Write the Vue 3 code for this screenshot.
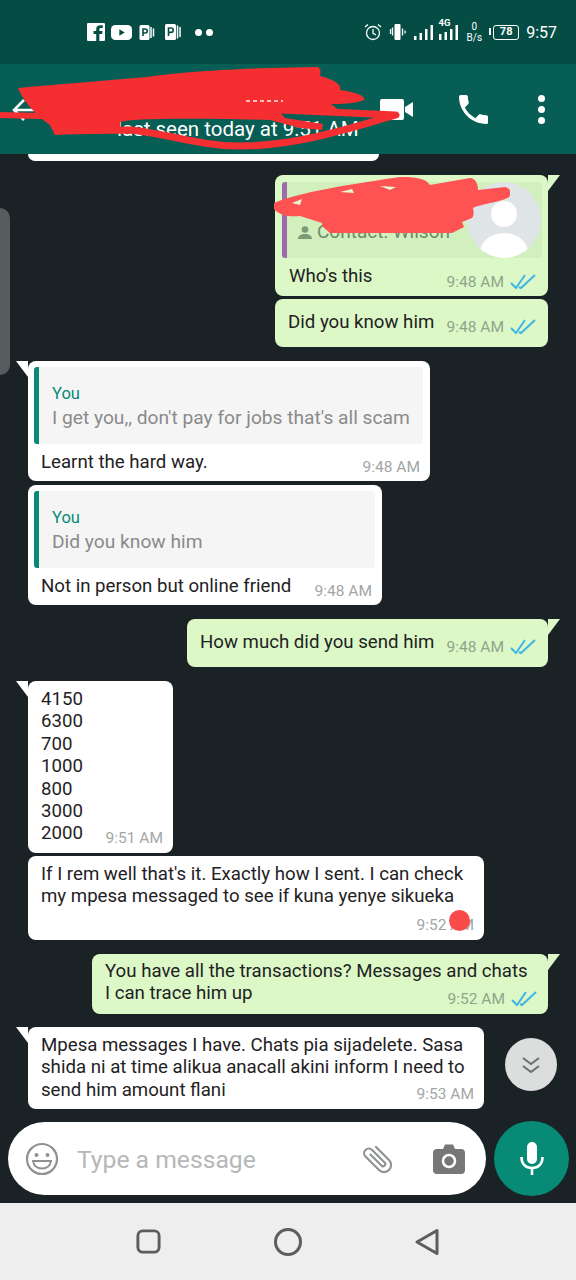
<template>
  <div class="phone">
    <div class="status">
      <div class="status-left">
        <svg width="18" height="18" viewBox="0 0 16 18" preserveAspectRatio="none"><path fill="#fff" d="M1 0h14a1 1 0 0 1 1 1v16a1 1 0 0 1-1 1h-4v-7h2.400l.4-3H11V6.400c0-.9.3-1.400 1.400-1.400H14V2.300C13.600 2.200 12.800 2.200 11.900 2.200 9.700 2.200 8.200 3.500 8.200 5.900V8H5.800v3h2.400v7H1a1 1 0 0 1-1-1V1a1 1 0 0 1 1-1z"/></svg>
        <svg width="21" height="15" viewBox="0 0 19 14" preserveAspectRatio="none"><rect width="19" height="14" rx="4" fill="#fff"/><path d="M7.500 4l5 3-5 3z" fill="#054d44"/></svg>
        <svg class="p-one" width="16" height="17" viewBox="0 0 15 17"><rect x="0" y="1" width="10" height="15" rx="1.500" fill="#fff"/><path fill="none" stroke="#054d44" stroke-width="1.600" d="M3.500 12V5h2.200a1.800 1.800 0 0 1 0 4H3.500"/><path fill="none" stroke="#fff" stroke-width="1.500" d="M11.500 3v11M14 4.500v8"/></svg>
        <svg class="p-two" width="18" height="18" viewBox="0 0 16 18"><rect x="0" y="1" width="11" height="16" rx="1.500" fill="#fff"/><path fill="none" stroke="#054d44" stroke-width="1.600" d="M3.500 13V5h2.500a2 2 0 0 1 0 4.400H3.500"/><path fill="none" stroke="#fff" stroke-width="1.500" d="M12.500 2.500v13M15 4v10"/></svg>
        <span class="dots"><i></i><i></i></span>
      </div>
      <div class="status-right">
        <svg width="18" height="18" viewBox="0 0 18 18" fill="none" stroke="#fff" stroke-width="1.300"><circle cx="9" cy="10" r="6.500"/><path d="M9 6v4.300l3 1.500M1 4l3-2.500M17 4l-3-2.500"/></svg>
        <svg width="18" height="16" viewBox="0 0 17 16"><rect x="5" y="0" width="6" height="16" rx="1" fill="#fff"/><path stroke="#fff" stroke-width="1.300" d="M1 5v5M3 3.500v8M13 4.500v7M15.500 6.500v3"/></svg>
        <svg class="bars" width="19" height="15" viewBox="0 0 19 15" fill="#fff"><rect x="0" y="11" width="2.500" height="4"/><rect x="5.500" y="8" width="2.500" height="7"/><rect x="11" y="4" width="2.500" height="11"/><rect x="16.500" y="0" width="2.500" height="15"/></svg>
        <span class="net">
          <b>4G</b>
          <svg width="19" height="15" viewBox="0 0 19 15" fill="#fff"><rect x="0" y="9" width="2.500" height="6"/><rect x="5.500" y="7" width="2.500" height="8"/><rect x="11" y="4" width="2.500" height="11"/><rect x="16.500" y="0" width="2.500" height="15"/></svg>
        </span>
        <span class="speed"><span>0</span><span>B/s</span></span>
        <span class="battery"><i></i><span>78</span></span>
        <span class="clock">9:57</span>
      </div>
    </div>

    <header class="topbar">
      <div class="who">
        <svg class="back" width="22" height="24" viewBox="0 0 22 24" fill="none" stroke="#fff" stroke-width="2.500"><path d="M12 2L2 12l10 10M2 12h20"/></svg>
        <div class="seen">last seen today at 9:51 AM</div>
      </div>
      <svg class="video" width="33" height="21" viewBox="0 0 33 21"><rect width="24" height="21" rx="2" fill="#fff"/><path d="M25 8l8-5v15l-8-5z" fill="#fff"/></svg>
      <svg class="phone-ic" width="29" height="29" viewBox="3 3 18 18"><path fill="#fff" d="M6.620 10.790c1.440 2.830 3.760 5.140 6.590 6.590l2.200-2.200c.27-.27.67-.36 1.020-.24 1.120.37 2.330.57 3.570.57.55 0 1 .45 1 1V20c0 .55-.45 1-1 1-9.390 0-17-7.610-17-17 0-.55.45-1 1-1h3.500c.55 0 1 .45 1 1 0 1.250.2 2.450.57 3.570.11.35.03.74-.25 1.020l-2.200 2.200z"/></svg>
      <span class="kebab"><i></i><i></i><i></i></span>
    </header>

    <main class="chat">
      <div class="cut-bubble"></div>

      <div class="bubble out first w-contact">
        <div class="contact-card">
          <div class="contact-line">
            <svg width="14" height="13" viewBox="0 0 14 13" fill="#7f9a76"><circle cx="7" cy="3.500" r="3.300"/><path d="M0 13c0-3.500 3-5 7-5s7 1.500 7 5z"/></svg>
            Contact: Wilson
          </div>
          <div class="avatar"><i></i><b></b></div>
        </div>
        <div class="row contact-row">
          <span>Who's this</span>
          <span class="meta">9:48 AM <Ticks /></span>
        </div>
      </div>

      <div class="bubble out tight pad-single w-contact">
        <div class="row">
          <span>Did you know him</span>
          <span class="meta">9:48 AM <Ticks /></span>
        </div>
      </div>

      <div class="bubble in first w-402 group">
        <div class="quote">
          <div class="quote-who">You</div>
          <div class="quote-text">I get you,, don't pay for jobs that's all scam</div>
        </div>
        <div class="row quote-row">
          <span>Learnt the hard way.</span>
          <span class="meta">9:48 AM</span>
        </div>
      </div>

      <div class="bubble in w-354 near">
        <div class="quote">
          <div class="quote-who">You</div>
          <div class="quote-text">Did you know him</div>
        </div>
        <div class="row quote-row">
          <span>Not in person but online friend</span>
          <span class="meta">9:48 AM</span>
        </div>
      </div>

      <div class="bubble out first pad-single w-361 group">
        <div class="row">
          <span>How much did you send him</span>
          <span class="meta">9:48 AM <Ticks /></span>
        </div>
      </div>

      <div class="bubble in first numbers group">
        <div>4150<br>6300<br>700<br>1000<br>800<br>3000<br>2000</div>
        <span class="meta over">9:51 AM</span>
      </div>

      <div class="bubble in tight multi w-456">
        <div>If I rem well that's it. Exactly how I sent. I can check<br>my mpesa messaged to see if kuna yenye sikueka</div>
        <span class="meta over">9:52 AM</span>
        <span class="red-dot"></span>
      </div>

      <div class="bubble out first multi-out w-456 group">
        <div>You have all the transactions? Messages and chats<br>I can trace him up</div>
        <span class="meta over">9:52 AM <Ticks /></span>
      </div>

      <div class="bubble in first last-msg w-456 group">
        <div>Mpesa messages I have. Chats pia sijadelete. Sasa<br>shida ni at time alikua anacall akini inform I need to<br>send him amount flani</div>
        <span class="meta over">9:53 AM</span>
      </div>

      <div class="edge-handle"></div>
      <div class="scroll-down">
        <svg width="22" height="22" viewBox="0 0 22 22" fill="none" stroke="#6b6f70" stroke-width="2"><path d="M3 4l8 6 8-6M3 12l8 6 8-6"/></svg>
      </div>
    </main>

    <div class="composer">
      <div class="input">
        <svg width="34" height="34" viewBox="0 0 34 34" fill="none" stroke="#8f9294" stroke-width="2.200"><circle cx="17" cy="17" r="15"/><circle cx="11.500" cy="13" r="2" fill="#8f9294" stroke="none"/><circle cx="22.500" cy="13" r="2" fill="#8f9294" stroke="none"/><path d="M8 19h18c-.8 5-4.500 7.500-9 7.500S8.800 24 8 19z" stroke-width="1.800"/></svg>
        <span class="placeholder">Type a message</span>
        <svg class="clip" width="34" height="34" viewBox="0 0 24 24" fill="none" stroke="#8f9294" stroke-width="1.500" stroke-linecap="round"><path transform="rotate(-45 12 12)" d="M17 5v13a5 5 0 0 1-10 0V4.500a3.300 3.300 0 0 1 6.600 0V17a1.600 1.600 0 0 1-3.200 0V6"/></svg>
        <svg class="camera" width="32" height="30" viewBox="0 0 32 30"><path fill="#757779" d="M4 5h6l2-4.500h8L22 5h6a4 4 0 0 1 4 4v17a4 4 0 0 1-4 4H4a4 4 0 0 1-4-4V9a4 4 0 0 1 4-4z"/><circle cx="16" cy="17" r="6" fill="none" stroke="#fff" stroke-width="2.500"/></svg>
      </div>
      <div class="mic">
        <svg width="24" height="33" viewBox="0 0 24 33" fill="none" stroke="#fff" stroke-width="2.600"><rect x="7" y="0" width="10" height="22" rx="5" fill="#fff" stroke="none"/><path d="M1.500 15c0 7 4 11 10.500 11s10.500-4 10.500-11M12 26v7"/></svg>
      </div>
    </div>

    <nav class="navbar">
      <svg width="27" height="27" viewBox="0 0 28 28" fill="none" stroke="#5b5d5f" stroke-width="3"><rect x="3" y="3" width="22" height="22" rx="5"/></svg>
      <svg width="30" height="30" viewBox="0 0 30 30" fill="none" stroke="#5b5d5f" stroke-width="3"><circle cx="15" cy="15" r="12.500"/></svg>
      <svg width="26" height="28" viewBox="0 0 26 28" fill="none" stroke="#5b5d5f" stroke-width="3" stroke-linejoin="round"><path d="M23 2.500v23L3 14z"/></svg>
    </nav>

    <!-- red scribbles drawn over the screenshot to hide the names -->
    <svg class="scribble header-scribble" width="576" height="100" viewBox="0 60 576 100" fill="none">
      <path fill="#f52f31" d="M18 88C50 85 100 81 147 77 180 72 240 68 318 67c4 3 2 7 2 9 15 4 22 9 20 14 15 2 26 6 24 10-9 4-24 4-33 4l9 7-60 1 5 6 38 6-1 6-22-2-30-8c-70-2-140-2-150 2v8l-65 5-5-10C40 118 25 105 18 88z"/>
      <path stroke="#f52f31" stroke-width="6" d="M0 115l120 3"/>
      <path stroke="#f52f31" stroke-width="7" stroke-linejoin="round" d="M55 131l75-1c40 4 70 16 110 16 60 0 120-21 156-31l-116-5"/>
      <path stroke="#ffe9e9" stroke-width="1.500" stroke-dasharray="4 3" d="M246 101h37"/>
    </svg>
    <svg class="scribble contact-scribble" width="236" height="56" viewBox="274 177 236 56">
      <path fill="#ff5252" d="M274 203c18-8 56-16 126-26 15 0 26 1 30 8l40-7c5 0 8 5 8 12l27-3c5 1 7 6 5 9-3 5-30 8-37 12 1 4 1 8-1 10l-10 4 2 5-12 6H330l-8-7v-3l-22-7c-10 1-20 0-26-7z"/>
      <path fill="#e6f8d2" d="M292 203l10-4-2 6zM340 192l12-3 2 4zM380 186l16 1-6 3z"/>
    </svg>
  </div>
</template>

<script setup>
import { h } from 'vue'

const Ticks = () => h('svg', { width: 27, height: 16, viewBox: '0 0 27 16', fill: 'none', stroke: '#3fb4e6', 'stroke-width': 2, class: 'ticks' }, [
  h('path', { d: 'M1 9l5 5L15 1M9 13l2 1L25 1' }),
])
</script>

<style>
body {
  background: #1a2226;
}
</style>

<style scoped>
.phone {
  position: relative;
  width: 576px;
  height: 1280px;
  overflow: hidden;
  display: flex;
  flex-direction: column;
  font-family: Roboto, "Liberation Sans", sans-serif;
  color: #1f2224;
  background: #1a2226;
}
.status {
  height: 64px;
  flex: none;
  background: #054d44;
  color: #fff;
  display: flex;
  justify-content: space-between;
  align-items: center;
  padding: 0 19px 0 87px;
  box-sizing: border-box;
}
.status-left {
  display: flex;
  align-items: center;
  gap: 6px;
}
.p-one {
  margin-left: 1px;
}
.p-two {
  margin-left: 3px;
}
.dots {
  display: flex;
  gap: 4px;
  margin-left: 7px;
}
.dots i {
  width: 7px;
  height: 7px;
  border-radius: 50%;
  background: #fff;
}
.status-right {
  display: flex;
  align-items: center;
  gap: 7px;
}
.bars {
  margin-top: 1px;
}
.net {
  position: relative;
  display: block;
  height: 15px;
  margin-top: 1px;
  margin-left: -1px;
}
.net b {
  position: absolute;
  left: 0;
  top: -7px;
  font-size: 9.500px;
  line-height: 10px;
}
.net svg,
.status-right svg {
  display: block;
}
.speed {
  display: flex;
  flex-direction: column;
  align-items: center;
  font-size: 10px;
  line-height: 11px;
  margin-left: 2px;
}
.battery {
  position: relative;
  width: 26px;
  height: 15px;
  box-sizing: border-box;
  border: 1.500px solid #fff;
  border-radius: 3px;
  margin-left: 4px;
  font-size: 11px;
  font-weight: 700;
  line-height: 12px;
  text-align: center;
}
.battery i {
  position: absolute;
  left: -5.500px;
  top: 2.500px;
  width: 2px;
  height: 7px;
  background: #fff;
}
.clock {
  font-size: 16px;
}
.topbar {
  height: 90px;
  flex: none;
  background: #075e54;
  display: flex;
  align-items: center;
  padding: 0 31px 0 12px;
  box-sizing: border-box;
  color: #fff;
}
.who {
  position: relative;
  flex: 1;
  height: 100%;
}
.back {
  position: absolute;
  left: 0;
  top: 34px;
}
.seen {
  position: absolute;
  left: 105px;
  top: 53px;
  font-size: 20.500px;
  line-height: 24px;
  white-space: nowrap;
}
.video {
  margin-right: 46px;
  margin-top: 1px;
}
.phone-ic {
  margin-right: 50px;
}
.kebab {
  display: flex;
  flex-direction: column;
  gap: 4px;
}
.kebab i {
  width: 7px;
  height: 7px;
  border-radius: 50%;
  background: #fff;
}
.chat {
  position: relative;
  flex: 1;
  min-height: 0;
  display: flex;
  flex-direction: column;
  padding: 0 28px;
  overflow: hidden;
}
.cut-bubble {
  width: 351px;
  height: 7px;
  background: #fff;
  border-radius: 0 0 8px 8px;
  flex: none;
}
.bubble {
  position: relative;
  flex: none;
  box-sizing: border-box;
  border-radius: 8px;
  font-size: 18.650px;
  line-height: 22.400px;
}
.bubble.in {
  background: #fff;
  align-self: flex-start;
}
.bubble.out {
  background: #dcf8c6;
  align-self: flex-end;
}
.first {
  margin-top: 14px;
}
.tight {
  margin-top: 3px;
}
.near {
  margin-top: 4px;
}
.bubble.first.in::before {
  content: "";
  position: absolute;
  left: -12px;
  top: 0;
  border-top: 16px solid #fff;
  border-left: 12px solid transparent;
}
.bubble.first.out::before {
  content: "";
  position: absolute;
  right: -12px;
  top: 0;
  border-top: 16px solid #dcf8c6;
  border-right: 12px solid transparent;
}
.w-contact {
  width: 273px;
  padding: 7px 11px 0 7px;
}
.bubble.first.w-contact {
  height: 121px;
}
.bubble.tight.w-contact {
  height: 48px;
}
.w-402 {
  width: 402px;
  height: 120px;
  padding: 6px 7px 0 6px;
}
.w-354 {
  width: 354px;
  height: 120px;
  padding: 6px 7px 0 6px;
}
.w-361 {
  width: 361px;
  height: 48px;
}
.w-456 {
  width: 456px;
}
.pad-single {
  padding: 12px 11px 0 13px;
}
.contact-card {
  position: relative;
  height: 76px;
  margin-right: -5px;
  background: #d2efbe;
  border-left: 5px solid #9c6ba8;
  border-radius: 3px;
  box-sizing: border-box;
  overflow: hidden;
}
.contact-line {
  position: absolute;
  left: 11px;
  top: 39px;
  display: flex;
  align-items: center;
  gap: 5px;
  font-size: 19px;
  line-height: 22px;
  color: #6d8a68;
}
.avatar {
  position: absolute;
  right: 1px;
  top: 0;
  width: 74px;
  height: 76px;
  border-radius: 50%;
  background: #dfe5e7;
  overflow: hidden;
}
.avatar i {
  position: absolute;
  left: 24px;
  top: 19px;
  width: 26px;
  height: 26px;
  border-radius: 50%;
  background: #fff;
}
.avatar b {
  position: absolute;
  left: 13px;
  top: 51px;
  width: 48px;
  height: 40px;
  border-radius: 50%;
  background: #fff;
}
.row {
  display: flex;
  justify-content: space-between;
}
.contact-row {
  padding: 7px 0 0 7px;
}
.quote {
  height: 77px;
  box-sizing: border-box;
  background: #f5f5f5;
  border-left: 5px solid #078a76;
  border-radius: 3px;
  padding: 16px 0 0 13px;
}
.quote-who {
  font-size: 16.500px;
  line-height: 22px;
  color: #078a76;
}
.quote-text {
  font-size: 19.200px;
  line-height: 24px;
  margin-top: 1px;
  color: #8a8a8a;
  white-space: nowrap;
}
.quote-row {
  padding: 7px 3px 0 7px;
}
.meta {
  display: inline-flex;
  align-items: center;
  gap: 6px;
  font-size: 15.500px;
  line-height: 20px;
  color: #a3a6a6;
  white-space: nowrap;
  margin-top: 6px;
}
.contact-row .meta {
  margin-top: 7px;
}
.out .meta {
  color: #8fa58b;
}
.ticks {
  display: block;
}
.numbers {
  width: 145px;
  height: 172px;
  padding: 7px 10px 0 13px;
}
.multi {
  padding: 7px 9px 0 13px;
  height: 84px;
}
.red-dot {
  position: absolute;
  left: 421px;
  top: 54px;
  width: 21px;
  height: 21px;
  border-radius: 50%;
  background: #fb4a4a;
}
.multi-out {
  height: 60px;
  padding: 6px 9px 0 13px;
}
.last-msg {
  height: 82px;
  padding: 7px 9px 0 13px;
  margin-top: 13px;
}
.over {
  position: absolute;
  right: 10px;
  bottom: 5px;
  margin-top: 0;
}
.edge-handle {
  position: absolute;
  left: -62px;
  top: 54px;
  width: 72px;
  height: 167px;
  background: #595c5e;
  border-radius: 0 10px 10px 0;
}
.scroll-down {
  position: absolute;
  left: 505px;
  top: 884px;
  width: 52px;
  height: 53px;
  border-radius: 50%;
  background: #dcdddd;
  display: flex;
  align-items: center;
  justify-content: center;
}
.composer {
  flex: none;
  height: 81px;
  display: flex;
  align-items: flex-start;
  gap: 8px;
  padding: 0 7px 0 8px;
  box-sizing: border-box;
}
.input {
  width: 478px;
  height: 73px;
  border-radius: 37px;
  background: #fff;
  display: flex;
  align-items: center;
  padding: 0 21px 0 17px;
  box-sizing: border-box;
}
.placeholder {
  flex: 1;
  margin-left: 18px;
  margin-top: 2px;
  font-size: 24.700px;
  color: #b5b7b8;
}
.clip {
  margin-right: 38px;
}
.mic {
  width: 75px;
  height: 75px;
  flex: none;
  margin-top: -1px;
  border-radius: 50%;
  background: #078a76;
  display: flex;
  align-items: center;
  justify-content: center;
}
.navbar {
  flex: none;
  height: 77px;
  background: #eeeeee;
  display: flex;
  align-items: center;
  padding: 0 136px 0 135px;
  justify-content: space-between;
  box-sizing: border-box;
}
.scribble {
  position: absolute;
  pointer-events: none;
}
.header-scribble {
  left: 0;
  top: 60px;
}
.contact-scribble {
  left: 274px;
  top: 177px;
}
</style>
